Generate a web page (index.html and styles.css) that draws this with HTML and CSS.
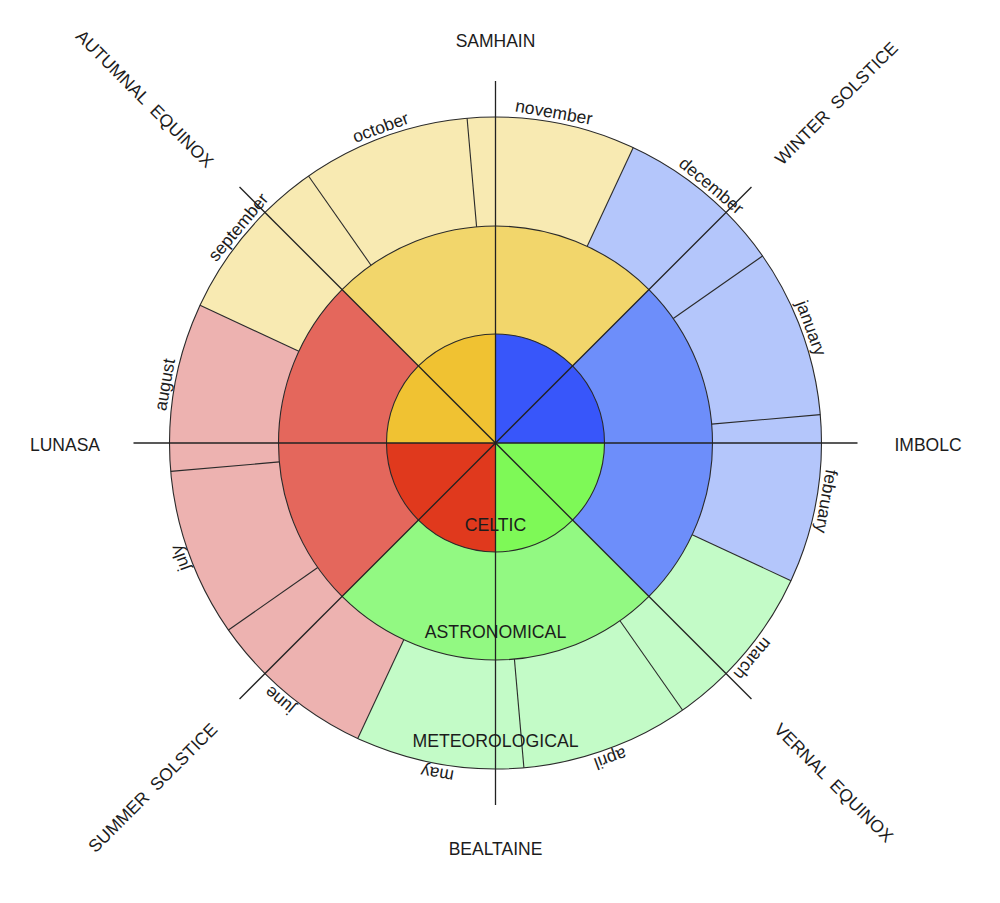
FILE: index.html
```html
<!DOCTYPE html>
<html lang="en">
<head>
<meta charset="utf-8">
<title>Wheel of the Year</title>
<link rel="stylesheet" href="styles.css">
</head>
<body>
<main class="page">
<svg class="wheel" width="1000" height="903" viewBox="0 0 1000 903" xmlns="http://www.w3.org/2000/svg">
  <g transform="translate(495.5,443)">
    <!-- meteorological (outer) -->
    <path class="met-yellow" d="M0,0 L137.77,-295.46 A326,326 0 0 0 -295.46,-137.77 Z"/>
    <path class="met-blue" d="M0,0 L295.46,137.77 A326,326 0 0 0 137.77,-295.46 Z"/>
    <path class="met-green" d="M0,0 L-137.77,295.46 A326,326 0 0 0 295.46,137.77 Z"/>
    <path class="met-red" d="M0,0 L-295.46,-137.77 A326,326 0 0 0 -137.77,295.46 Z"/>
    <!-- astronomical (middle) -->
    <path class="ast-yellow" d="M0,0 L153.44,-153.44 A217,217 0 0 0 -153.44,-153.44 Z"/>
    <path class="ast-blue" d="M0,0 L153.44,153.44 A217,217 0 0 0 153.44,-153.44 Z"/>
    <path class="ast-green" d="M0,0 L-153.44,153.44 A217,217 0 0 0 153.44,153.44 Z"/>
    <path class="ast-red" d="M0,0 L-153.44,-153.44 A217,217 0 0 0 -153.44,153.44 Z"/>
    <!-- celtic (inner) -->
    <path class="cel-yellow" d="M0,0 L0,-109 A109,109 0 0 0 -109,0 Z"/>
    <path class="cel-blue" d="M0,0 L109,0 A109,109 0 0 0 0,-109 Z"/>
    <path class="cel-green" d="M0,0 L0,109 A109,109 0 0 0 109,0 Z"/>
    <path class="cel-red" d="M0,0 L-109,0 A109,109 0 0 0 0,109 Z"/>

    <!-- ring outlines -->
    <circle class="ring" r="326"/>
    <circle class="ring" r="217"/>
    <circle class="ring" r="109"/>

    <!-- month dividers -->
    <g class="divider">
      <line x1="216.17" y1="-18.91" x2="324.76" y2="-28.41"/>
      <line x1="177.76" y1="-124.47" x2="267.04" y2="-186.99"/>
      <line x1="91.71" y1="-196.67" x2="137.77" y2="-295.46"/>
      <line x1="-18.91" y1="-216.17" x2="-28.41" y2="-324.76"/>
      <line x1="-124.47" y1="-177.76" x2="-186.99" y2="-267.04"/>
      <line x1="-196.67" y1="-91.71" x2="-295.46" y2="-137.77"/>
      <line x1="-216.17" y1="18.91" x2="-324.76" y2="28.41"/>
      <line x1="-177.76" y1="124.47" x2="-267.04" y2="186.99"/>
      <line x1="-91.71" y1="196.67" x2="-137.77" y2="295.46"/>
      <line x1="18.91" y1="216.17" x2="28.41" y2="324.76"/>
      <line x1="124.47" y1="177.76" x2="186.99" y2="267.04"/>
      <line x1="196.67" y1="91.71" x2="295.46" y2="137.77"/>
    </g>

    <!-- axes -->
    <g class="axis">
      <line x1="0" y1="-362" x2="0" y2="362"/>
      <line x1="-362" y1="0" x2="362" y2="0"/>
      <line x1="-255.97" y1="-255.97" x2="255.97" y2="255.97"/>
      <line x1="-255.97" y1="255.97" x2="255.97" y2="-255.97"/>
    </g>

    <!-- month labels -->
    <g class="month">
      <text transform="rotate(10)" x="0" y="-330">november</text>
      <text transform="rotate(-20)" x="0" y="-330">october</text>
      <text transform="rotate(-50)" x="0" y="-330">september</text>
      <text transform="rotate(-80)" x="0" y="-330">august</text>
      <text transform="rotate(-110)" x="0" y="-330">july</text>
      <text transform="rotate(-140)" x="0" y="-330">june</text>
      <text transform="rotate(-170)" x="0" y="-330">may</text>
      <text transform="rotate(160)" x="0" y="-330">april</text>
      <text transform="rotate(130)" x="0" y="-330">march</text>
      <text transform="rotate(100)" x="0" y="-330">february</text>
      <text transform="rotate(70)" x="0" y="-330">january</text>
      <text transform="rotate(40)" x="0" y="-330">december</text>
    </g>
  </g>

  <!-- ring names -->
  <g class="ring-name">
    <text x="495.5" y="531">CELTIC</text>
    <text x="495.5" y="638">ASTRONOMICAL</text>
    <text x="495.5" y="747">METEOROLOGICAL</text>
  </g>

  <!-- festivals and solar points -->
  <g class="festival">
    <text x="495.5" y="47">SAMHAIN</text>
    <text x="928" y="451">IMBOLC</text>
    <text x="495.5" y="855">BEALTAINE</text>
    <text x="65" y="451">LUNASA</text>
    <text transform="translate(840.6,107.6) rotate(-45)">WINTER  SOLSTICE</text>
    <text transform="translate(140.4,103.1) rotate(45)">AUTUMNAL  EQUINOX</text>
    <text transform="translate(157,792) rotate(-45)">SUMMER  SOLSTICE</text>
    <text transform="translate(829.4,787) rotate(45)">VERNAL  EQUINOX</text>
  </g>
</svg>
</main>
</body>
</html>
```

FILE: styles.css
```css
html, body {
  margin: 0;
  padding: 0;
  background: #ffffff;
}

.page {
  width: 1000px;
  height: 903px;
  overflow: hidden;
}

.wheel {
  display: block;
}

.met-yellow { fill: #f8eab2; }
.met-blue   { fill: #b4c6fb; }
.met-green  { fill: #c3fbc7; }
.met-red    { fill: #edb2b0; }

.ast-yellow { fill: #f2d66b; }
.ast-blue   { fill: #6d8efa; }
.ast-green  { fill: #92f982; }
.ast-red    { fill: #e4675c; }

.cel-yellow { fill: #f0c232; }
.cel-blue   { fill: #3856fa; }
.cel-green  { fill: #7ef957; }
.cel-red    { fill: #e0391d; }

.ring {
  fill: none;
  stroke: #2a2a2a;
  stroke-width: 1.1;
}

.divider line {
  stroke: #2a2a2a;
  stroke-width: 1.1;
}

.axis line {
  stroke: #222222;
  stroke-width: 1.3;
}

.month text,
.ring-name text,
.festival text {
  font-family: "Liberation Sans", Arial, sans-serif;
  fill: #1c1c1c;
  text-anchor: middle;
  white-space: pre;
}

.month text {
  font-size: 17.5px;
}

.ring-name text {
  font-size: 17.7px;
}

.festival text {
  font-size: 17.5px;
}
```
